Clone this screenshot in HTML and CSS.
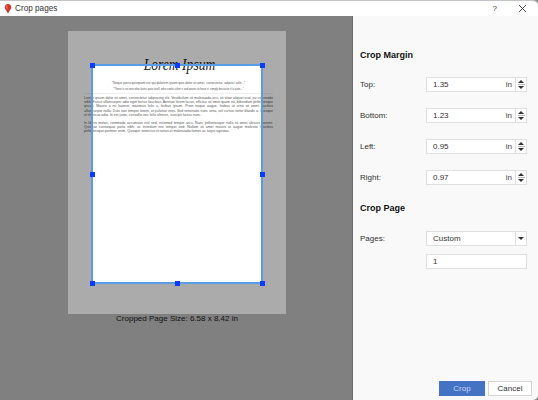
FILE: index.html
```html
<!DOCTYPE html>
<html lang="en">
<head>
  <meta charset="UTF-8" />
  <title>Crop pages</title>
  <link rel="stylesheet" href="styles.css">
</head>
<body>
  <div class="window">
    <div class="titlebar">
      <svg class="app-icon" width="8" height="11" viewBox="0 0 10 12">
        <path d="M5 0.5C2.400 0.500 1 2.400 1 4.300c0 2 1.600 3.600 2.600 5.200L4.400 11.500h1.200L6.400 9.500C7.400 7.900 9 6.300 9 4.300 9 2.400 7.600 0.500 5 0.500z" fill="#d8322a"/>
        <path d="M3.400 2.500C3 3.500 3.400 5 4.300 6" stroke="#f7b7a8" stroke-width="1" fill="none"/>
      </svg>
      <span class="title">Crop pages</span>
      <span class="help">?</span>
      <svg class="close" width="9" height="9" viewBox="0 0 9 9">
        <path d="M1 1L8 8M8 1L1 8" stroke="#333" stroke-width="0.9"/>
      </svg>
    </div>

    <div class="main">
      <div class="canvas">
        <div class="page">
          <h1 class="doc-title">Lorem Ipsum</h1>
          <p class="doc-quote">"Neque porro quisquam est qui dolorem ipsum quia dolor sit amet, consectetur, adipisci velit..."</p>
          <p class="doc-quote small">"There is no one who loves pain itself, who seeks after it and wants to have it, simply because it is pain..."</p>
          <hr class="doc-rule">
          <p class="doc-text">Lorem ipsum dolor sit amet, consectetur adipiscing elit. Vestibulum sit malesuada orci, sit vitae aliquet erat, eu commodo nibh. Fusce ullamcorper odio eget lectus faucibus. Aenean lorem lacus, efficitur sit amet quam eu, bibendum pellentesque ipsum. Mauris a mi laoreet, maximus felis a, finibus ipsum. Proin neque augue, finibus ut urna sit amet, facilisis ullamcorper nulla. Duis non tempor lorem, at pulvinar eros. Sed venenatis nunc urna, vel cursus tortor blandit a. Quisque et rhoncus odio. In est justo, convallis nec felis ultrices, suscipit luctus nunc.</p>
          <p class="doc-text">In libero metus, commodo accumsan nisl sed, euismod tempor arcu. Nunc pellentesque nulla sit amet ultrices laoreet. Quisque consequat porta nibh, ac interdum nisi tempor sed. Nullam sit amet mauris ut augue molestie faucibus pellentesque porttitor enim. Quisque senectus et netus et malesuada fames ac turpis egestas.</p>
          <div class="crop-box">
            <span class="handle tl"></span><span class="handle tc"></span><span class="handle tr"></span>
            <span class="handle ml"></span><span class="handle mr"></span>
            <span class="handle bl"></span><span class="handle bc"></span><span class="handle br"></span>
          </div>
        </div>
        <div class="page-size">Cropped Page Size: 6.58 x 8.42 in</div>
      </div>

      <div class="sidebar">
        <h2 class="heading">Crop Margin</h2>
        <div class="row">
          <label>Top:</label>
          <div class="field"><span class="value">1.35</span><span class="unit">in</span></div>
          <div class="spin"><span class="arrow up"></span><span class="divider"></span><span class="arrow down"></span></div>
        </div>
        <div class="row">
          <label>Bottom:</label>
          <div class="field"><span class="value">1.23</span><span class="unit">in</span></div>
          <div class="spin"><span class="arrow up"></span><span class="divider"></span><span class="arrow down"></span></div>
        </div>
        <div class="row">
          <label>Left:</label>
          <div class="field"><span class="value">0.95</span><span class="unit">in</span></div>
          <div class="spin"><span class="arrow up"></span><span class="divider"></span><span class="arrow down"></span></div>
        </div>
        <div class="row">
          <label>Right:</label>
          <div class="field"><span class="value">0.97</span><span class="unit">in</span></div>
          <div class="spin"><span class="arrow up"></span><span class="divider"></span><span class="arrow down"></span></div>
        </div>
        <h2 class="heading second">Crop Page</h2>
        <div class="row pages">
          <label>Pages:</label>
          <div class="field"><span class="value">Custom</span></div>
          <div class="spin select"><span class="arrow down"></span></div>
        </div>
        <div class="row custom">
          <label></label>
          <div class="field wide"><span class="value">1</span></div>
        </div>
        <div class="buttons">
          <button class="btn primary">Crop</button>
          <button class="btn cancel">Cancel</button>
        </div>
      </div>
    </div>
  </div>
</body>
</html>
```

FILE: styles.css
```css
* {
  box-sizing: border-box;
}
body {
  margin: 0;
  width: 538px;
  height: 400px;
  overflow: hidden;
  font-family: 'Liberation Sans', Arial, sans-serif;
  background: #8a8a8a;
}
.window {
  display: flex;
  flex-direction: column;
  height: 400px;
  border-top: 1px solid #c4c4c4;
  border-radius: 0 5px 5px 0;
  overflow: hidden;
}
.titlebar {
  display: flex;
  align-items: center;
  height: 15px;
  padding-left: 4px;
  background: white;
  color: #333;
}
.app-icon {
  margin-right: 3px;
}
.title {
  font-size: 8.2px;
  flex: 1;
}
.help {
  font-size: 8px;
  margin-right: 21px;
}
.close {
  margin-right: 11px;
}
.main {
  display: flex;
  flex: 1;
  min-height: 0;
}
.canvas {
  width: 353px;
  padding: 15px 0 0 68px;
  background: #808080;
  border-right: 1px solid #6e6e6e;
}
.page {
  position: relative;
  width: 218px;
  height: 283px;
  padding: 24px 13px 0 16px;
  background: white;
  overflow: hidden;
}
.doc-title {
  margin: 0 0 6px;
  font-family: 'Liberation Serif', serif;
  font-size: 17px;
  font-weight: normal;
  font-style: italic;
  line-height: 20px;
  text-align: center;
  color: #222;
  transform: translateX(1px) scaleX(0.8);
}
.doc-quote {
  margin: 0 0 1px;
  font-size: 3.2px;
  line-height: 4.5px;
  text-align: center;
  color: #555;
}
.doc-quote.small {
  font-size: 2.8px;
}
.doc-rule {
  margin: 2px 0 2px;
  border: none;
  border-top: 1px solid #eee;
}
.doc-text {
  margin: 0 0 3.5px;
  font-size: 3.5px;
  line-height: 4.2px;
  text-align: justify;
  color: #555;
}
.crop-box {
  position: absolute;
  left: 23px;
  top: 33px;
  width: 172px;
  height: 220px;
  border: 2px solid #5a9ce8;
  box-shadow: 0 0 0 300px rgba(0,0,0,0.33);
}
.handle {
  position: absolute;
  width: 5px;
  height: 5px;
  background: #0a3cff;
}
.tl { left: -3px; top: -3px; }
.tc { left: 82px; top: -3px; }
.tr { right: -4px; top: -3px; }
.ml { left: -3px; top: 106px; }
.mr { right: -4px; top: 106px; }
.bl { left: -3px; bottom: -4px; }
.bc { left: 82px; bottom: -4px; }
.br { right: -4px; bottom: -4px; }
.page-size {
  width: 218px;
  font-size: 8px;
  line-height: 9px;
  text-align: center;
  color: #111;
}
.sidebar {
  display: flex;
  flex-direction: column;
  flex: 1;
  padding: 33px 11px 4px 7px;
  background: #f9f9f9;
  color: #333;
}
.heading {
  margin: 0 0 16px;
  font-size: 9px;
  line-height: 12px;
  color: #111;
}
.heading.second {
  margin-top: 1px;
  margin-bottom: 17px;
}
.row {
  display: flex;
  align-items: center;
  height: 15px;
  margin-bottom: 16px;
  font-size: 8px;
}
.row label {
  width: 66px;
}
.field {
  display: flex;
  justify-content: space-between;
  align-items: center;
  width: 90px;
  height: 15px;
  padding: 0 3px 0 6px;
  background: white;
  border: 1px solid #e0e0e0;
}
.field.wide {
  width: 101px;
}
.unit {
  color: #444;
}
.spin {
  display: flex;
  flex-direction: column;
  justify-content: center;
  align-items: center;
  gap: 1px;
  width: 11px;
  height: 15px;
  background: white;
  border: 1px solid #e0e0e0;
  border-left: none;
}
.divider {
  width: 7px;
  border-top: 1px solid #bbb;
}
.arrow {
  width: 0;
  height: 0;
  border-left: 3px solid transparent;
  border-right: 3px solid transparent;
}
.arrow.up {
  border-bottom: 3px solid #333;
}
.arrow.down {
  border-top: 3px solid #333;
}
.row.pages {
  margin-bottom: 8px;
}
.row.custom {
  margin-bottom: 0;
}
.buttons {
  display: flex;
  justify-content: flex-end;
  gap: 3px;
  margin-top: auto;
  margin-right: -5px;
}
.btn {
  width: 46px;
  height: 15px;
  padding: 0;
  font-family: inherit;
  font-size: 8px;
  color: #333;
  background: white;
  border: 1px solid #d5d5d5;
}
.btn.cancel {
  width: 44px;
}
.btn.primary {
  color: #c9d6f2;
  background: #4472c4;
  border-color: #4472c4;
}
```
